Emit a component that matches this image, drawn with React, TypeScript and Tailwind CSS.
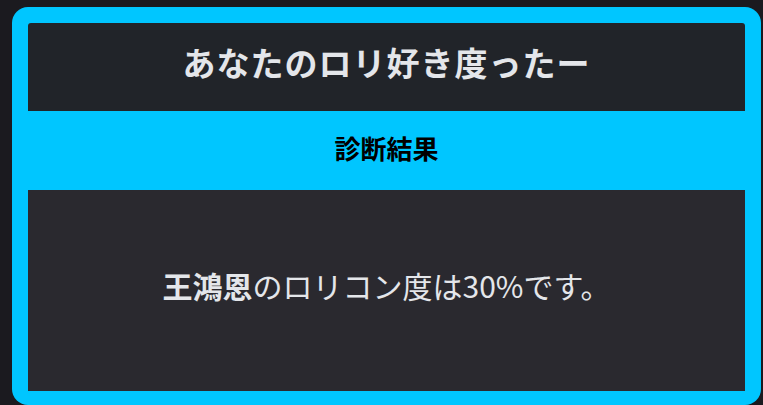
export default function App() {
  const jp = { fontFamily: '"Noto Sans CJK JP", "Noto Sans", sans-serif' };
  return (
    <div className="h-[405px] w-[763px] overflow-hidden bg-[#1b1a1f] pt-[7px] pl-[12px]" style={jp}>
      <div className="w-[749px] rounded-[16px] bg-[#00c6ff] p-4 pb-[14px] flex flex-col">
        <div className="h-[88px] rounded-t-[3px] bg-[#212429] flex items-center justify-center pb-[9px]">
          <h1 className="text-[33px] font-bold tracking-[1px] text-[#e4e6ea] leading-none">あなたのロリ好き度ったー</h1>
        </div>
        <div className="h-[79px] flex items-center justify-center pb-[6px]">
          <h2 className="text-[26px] font-bold text-black leading-none">診断結果</h2>
        </div>
        <div className="h-[201px] bg-[#2a292f] flex items-center justify-center pb-[11px]">
          <p className="text-[30px] text-[#e4e6ea] leading-none">
            <span className="font-bold">王鴻恩</span>のロリコン度は30%です。
          </p>
        </div>
      </div>
    </div>
  );
}
